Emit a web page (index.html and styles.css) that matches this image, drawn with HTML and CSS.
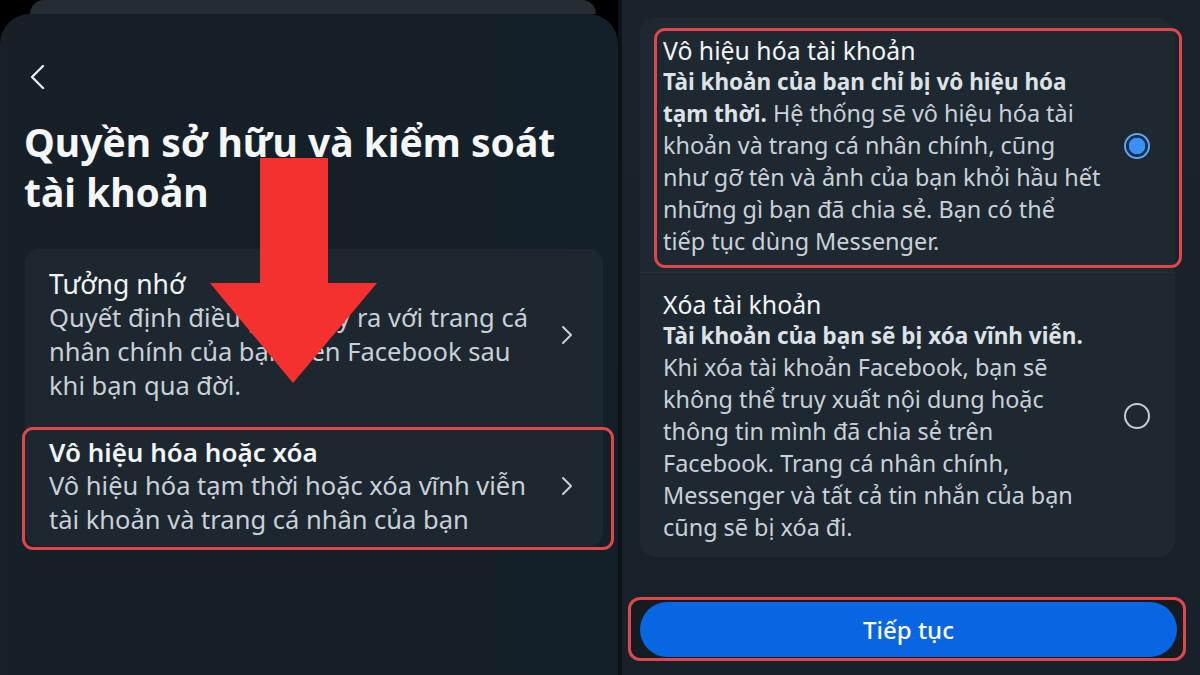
FILE: index.html
```html
<!DOCTYPE html>
<html lang="vi">
<head>
    <meta charset="UTF-8">
    <meta name="viewport" content="width=device-width, initial-scale=1.0">
    <title>Vô hiệu hóa hoặc xóa</title>
    <link rel="stylesheet" href="styles.css">
</head>
<body>
    <div class="phone left">
        <div class="sheet-back"></div>
        <div class="screen">
            <div class="back">
                <svg width="18" height="26" viewBox="0 0 18 26"><path d="M15 2 L4 13 L15 24" fill="none" stroke="#e8ecf0" stroke-width="2.4" stroke-linecap="round" stroke-linejoin="round"/></svg>
            </div>
            <h1 class="title">Quyền sở hữu và kiểm soát<br>tài khoản</h1>
            <div class="card">
                <div class="item">
                    <div class="item-text">
                        <div class="item-title">Tưởng nhớ</div>
                        <div class="item-desc">Quyết định điều gì sẽ xảy ra với trang cá<br>nhân chính của bạn trên Facebook sau<br>khi bạn qua đời.</div>
                    </div>
                    <svg class="chev" width="12" height="20" viewBox="0 0 12 20"><path d="M2 2 L10 10 L2 18" fill="none" stroke="#c9d0d8" stroke-width="2" stroke-linecap="round" stroke-linejoin="round"/></svg>
                </div>
                <div class="item marked">
                    <div class="item-text">
                        <div class="item-title">Vô hiệu hóa hoặc xóa</div>
                        <div class="item-desc">Vô hiệu hóa tạm thời hoặc xóa vĩnh viễn<br>tài khoản và trang cá nhân của bạn</div>
                    </div>
                    <svg class="chev" width="12" height="20" viewBox="0 0 12 20"><path d="M2 2 L10 10 L2 18" fill="none" stroke="#c9d0d8" stroke-width="2" stroke-linecap="round" stroke-linejoin="round"/></svg>
                </div>
            </div>
            <svg class="arrow" width="170" height="230" viewBox="0 0 170 230"><polygon points="50,0 118,0 118,125 167,125 83,225 0,125 50,125" fill="#f5312f"/></svg>
        </div>
    </div>
    <div class="divider"></div>
    <div class="phone right">
        <div class="options">
            <div class="option marked">
                <div class="option-text">
                    <div class="option-title">Vô hiệu hóa tài khoản</div>
                    <div class="option-desc"><b>Tài khoản của bạn chỉ bị vô hiệu hóa<br>tạm thời.</b> Hệ thống sẽ vô hiệu hóa tài<br>khoản và trang cá nhân chính, cũng<br>như gỡ tên và ảnh của bạn khỏi hầu hết<br>những gì bạn đã chia sẻ. Bạn có thể<br>tiếp tục dùng Messenger.</div>
                </div>
                <span class="radio checked"></span>
            </div>
            <div class="option">
                <div class="option-text">
                    <div class="option-title">Xóa tài khoản</div>
                    <div class="option-desc"><b>Tài khoản của bạn sẽ bị xóa vĩnh viễn.</b><br>Khi xóa tài khoản Facebook, bạn sẽ<br>không thể truy xuất nội dung hoặc<br>thông tin mình đã chia sẻ trên<br>Facebook. Trang cá nhân chính,<br>Messenger và tất cả tin nhắn của bạn<br>cũng sẽ bị xóa đi.</div>
                </div>
                <span class="radio"></span>
            </div>
        </div>
        <div class="actions">
            <button class="continue">Tiếp tục</button>
        </div>
    </div>
</body>
</html>
```

FILE: styles.css
```css
body {
    margin: 0;
    width: 1200px;
    height: 675px;
    overflow: hidden;
    display: flex;
    background: #000;
    font-family: 'Noto Sans', 'Open Sans', sans-serif;
    color: #c9d0d8;
}
.phone {
    height: 675px;
    display: flex;
    flex-direction: column;
}
.left {
    width: 618px;
}
.divider {
    width: 4px;
    background: #0c1218;
}
.right {
    width: 578px;
    background: linear-gradient(180deg, #19232c 0%, #16212a 100%);
}
.sheet-back {
    height: 14px;
    margin: 0 22px 0 30px;
    background: #262c33;
    border-radius: 26px 26px 0 0;
}
.screen {
    flex: 1;
    position: relative;
    background: linear-gradient(90deg, #171f27 0%, #142029 100%);
    border-radius: 30px 30px 0 0;
    padding: 50px 0 0 0;
}
.back {
    margin-left: 28px;
    height: 26px;
}
.title {
    margin: 27px 0 0 24px;
    font-size: 39px;
    line-height: 50px;
    font-weight: 700;
    color: #f4f6f8;
    white-space: nowrap;
}
.card {
    margin: 32px 15px 0 25px;
    background: #1d272f;
    border-radius: 14px;
}
.item {
    display: flex;
    align-items: center;
    padding: 19px 30px 27px 24px;
    position: relative;
}
.item.marked {
    padding-top: 7px;
    padding-bottom: 10px;
}
.item-text {
    flex: 1;
}
.item-title {
    font-size: 26.5px;
    line-height: 32px;
    color: #f2f4f6;
}
.item.marked .item-title {
    font-weight: 600;
    font-size: 26px;
}
.item-desc {
    font-size: 25.5px;
    line-height: 34px;
    white-space: nowrap;
}
.chev {
    margin-left: 10px;
}
.item.marked::after {
    content: "";
    position: absolute;
    top: -2px;
    left: -3px;
    right: -11px;
    bottom: -4px;
    border: 3px solid #e0464c;
    border-radius: 11px;
}
.arrow {
    position: absolute;
    left: 210px;
    top: 144px;
}
.options {
    margin: 18px 25px 0 18px;
    background: #1e2830;
    border-radius: 16px;
}
.option {
    display: flex;
    align-items: center;
    padding: 16px 25px 14px 23px;
    position: relative;
}
.option:first-child {
    padding-top: 17px;
    padding-bottom: 15px;
    border-bottom: 1px solid #232e36;
}
.option-text {
    flex: 1;
}
.option-title {
    font-size: 24.8px;
    line-height: 30px;
    color: #f2f4f6;
}
.option-desc {
    font-size: 23.4px;
    line-height: 32px;
    white-space: nowrap;
}
.option-desc b {
    font-size: 22.5px;
    line-height: 1;
    color: #dde2e7;
}
.option.marked::after {
    content: "";
    position: absolute;
    top: 10px;
    left: 14px;
    right: -7px;
    bottom: 4px;
    border: 3px solid #e0464c;
    border-radius: 11px;
}
.radio {
    width: 22px;
    height: 22px;
    flex-shrink: 0;
    border: 2.5px solid #c5cbd2;
    border-radius: 50%;
}
.radio.checked {
    border-color: #62a5ee;
    background: radial-gradient(circle, #3b90f5 0 8px, #10355c 8.5px 10px, transparent 10.5px);
}
.actions {
    margin: 40px 14px 0 6px;
    padding: 2px 6px 1px 9px;
    border: 3px solid #e0464c;
    border-radius: 12px;
    background: #141c22;
}
.continue {
    display: block;
    width: 100%;
    height: 55px;
    border: none;
    border-radius: 28px;
    background: #0866e2;
    color: #fff;
    font-family: 'Noto Sans', 'Open Sans', sans-serif;
    font-size: 24px;
    font-weight: 500;
    cursor: pointer;
}
```
